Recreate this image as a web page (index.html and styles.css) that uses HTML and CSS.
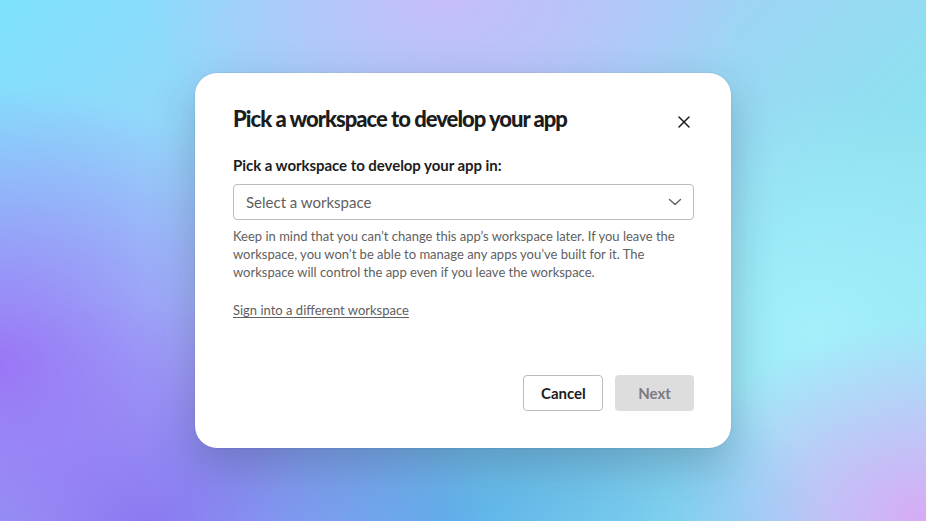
FILE: index.html
```html
<!DOCTYPE html>
<html>
<head>
<meta charset="UTF-8">
<meta name="viewport" content="width=device-width, initial-scale=1.0">
<title>Pick a workspace</title>
<link rel="stylesheet" href="styles.css">
</head>
<body>
<div class="backdrop">
	<div class="modal">
		<div class="modal_head">
			<h1>Pick a workspace to develop your app</h1>
			<button class="close" type="button" aria-label="Close">
				<svg width="14" height="14" viewBox="0 0 14 14"><path d="M2 2L12 12M12 2L2 12" stroke="#1d1c1d" stroke-width="1.5" stroke-linecap="round" fill="none"/></svg>
			</button>
		</div>
		<label class="field_label">Pick a workspace to develop your app in:</label>
		<div class="select">
			<span>Select a workspace</span>
			<svg width="14" height="8" viewBox="0 0 14 8"><path d="M1.5 1.5L7 6.5L12.5 1.5" stroke="#616061" stroke-width="1.4" stroke-linecap="round" stroke-linejoin="round" fill="none"/></svg>
		</div>
		<p class="hint">Keep in mind that you can’t change this app’s workspace later. If you leave the workspace, you won’t be able to manage any apps you’ve built for it. The workspace will control the app even if you leave the workspace.</p>
		<a class="switch" href="#">Sign into a different workspace</a>
		<div class="modal_foot">
			<button class="btn btn_cancel" type="button">Cancel</button>
			<button class="btn btn_next" type="button" disabled>Next</button>
		</div>
	</div>
</div>
</body>
</html>
```

FILE: styles.css
```css
*{margin:0;padding:0;outline:0;box-sizing:border-box;}
html,body{height:100%;}
body{font-family:Lato,"Noto Sans",sans-serif;color:#1d1c1d;overflow:hidden;}
button{font-family:inherit;background:none;border:0;cursor:pointer;}

.backdrop{height:100%;display:flex;align-items:center;justify-content:center;
	background:
		radial-gradient(ellipse 320px 280px at 0% 70%, #9a76f6 0%, rgba(154,118,246,0) 100%),
		radial-gradient(ellipse 340px 220px at 16% 100%, #867af0 0%, rgba(134,122,240,0) 100%),
		radial-gradient(ellipse 380px 200px at 48% 100%, #5cb2e8 0%, rgba(92,178,232,0) 100%),
		radial-gradient(ellipse 260px 200px at 100% 100%, #d8aaf6 0%, rgba(216,170,246,0) 100%),
		radial-gradient(ellipse 300px 180px at 48% 0%, #c6bdfa 0%, rgba(198,189,250,0) 100%),
		radial-gradient(ellipse 260px 240px at 88% 64%, #a3f0fb 0%, rgba(163,240,251,0) 100%),
		linear-gradient(135deg, #7ee2fd 0%, #a8cdf8 40%, #8ee0f0 70%, #a0e6f8 100%);
}

.modal{width:536px;height:375px;background:#fff;border-radius:22px;padding:32px 37px 37px 38px;display:flex;flex-direction:column;
	box-shadow:0 18px 44px rgba(40,40,80,0.28),0 0 0 1px rgba(0,0,0,0.04);}
.modal_head{display:flex;align-items:center;justify-content:space-between;height:28px;}
.modal_head h1{font-size:22px;font-weight:900;line-height:28px;letter-spacing:-1px;color:#1d1c1d;}
.close{width:28px;height:28px;display:flex;align-items:center;justify-content:center;margin-right:-4px;margin-top:6px;}

.field_label{display:block;margin-top:21px;font-size:15px;font-weight:700;line-height:22px;letter-spacing:-0.05px;color:#1d1c1d;}
.select{margin-top:8px;height:36px;border:1px solid #bcbcbc;border-radius:4px;display:flex;align-items:center;justify-content:space-between;padding:0 11px 0 12px;}
.select span{font-size:15px;color:#616061;}

.hint{margin-top:7px;font-size:13px;line-height:18px;color:#616061;}
.switch{align-self:flex-start;margin-top:20px;font-size:13px;line-height:18px;color:#616061;text-decoration:underline;text-underline-offset:2px;}

.modal_foot{margin-top:auto;display:flex;justify-content:flex-end;gap:12px;}
.btn{height:36px;padding:0 17px;border-radius:4px;font-size:15px;font-weight:700;}
.btn_cancel{width:80px;border:1px solid #bcbcbc;color:#1d1c1d;background:#fff;}
.btn_next{width:79px;background:#dddddd;color:#7c7a7f;cursor:default;}
```
